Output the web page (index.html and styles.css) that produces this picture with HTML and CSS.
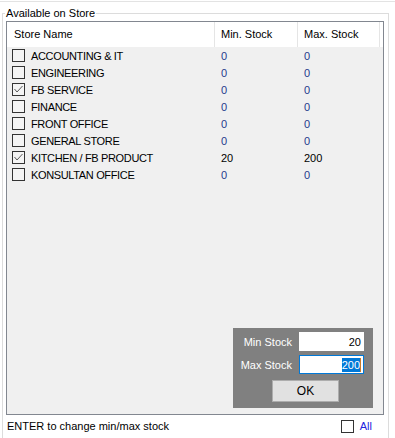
FILE: index.html
```html
<!DOCTYPE html>
<html>
<head>
<meta charset="utf-8">
<link rel="stylesheet" href="styles.css">
</head>
<body>
<div class="window">
  <fieldset class="group">
    <legend>Available on Store</legend>
    <div class="list">
      <div class="row head">
        <div class="cell c1">Store Name</div>
        <div class="cell c2">Min. Stock</div>
        <div class="cell c3">Max. Stock</div>
        <div class="cell c4"></div>
      </div>
      <div class="row item">
        <div class="cell c1"><span class="cb"></span>ACCOUNTING &amp; IT</div>
        <div class="cell c2 zero">0</div>
        <div class="cell c3 zero">0</div>
      </div>
      <div class="row item">
        <div class="cell c1"><span class="cb"></span>ENGINEERING</div>
        <div class="cell c2 zero">0</div>
        <div class="cell c3 zero">0</div>
      </div>
      <div class="row item">
        <div class="cell c1"><span class="cb"><svg viewBox="0 0 11 11" width="11" height="11"><polyline points="1.5,5 4,8 9.5,2" fill="none" stroke="#5a5a5a" stroke-width="1"/></svg></span>FB SERVICE</div>
        <div class="cell c2 zero">0</div>
        <div class="cell c3 zero">0</div>
      </div>
      <div class="row item">
        <div class="cell c1"><span class="cb"></span>FINANCE</div>
        <div class="cell c2 zero">0</div>
        <div class="cell c3 zero">0</div>
      </div>
      <div class="row item">
        <div class="cell c1"><span class="cb"></span>FRONT OFFICE</div>
        <div class="cell c2 zero">0</div>
        <div class="cell c3 zero">0</div>
      </div>
      <div class="row item">
        <div class="cell c1"><span class="cb"></span>GENERAL STORE</div>
        <div class="cell c2 zero">0</div>
        <div class="cell c3 zero">0</div>
      </div>
      <div class="row item">
        <div class="cell c1"><span class="cb"><svg viewBox="0 0 11 11" width="11" height="11"><polyline points="1.5,5 4,8 9.5,2" fill="none" stroke="#5a5a5a" stroke-width="1"/></svg></span>KITCHEN / FB PRODUCT</div>
        <div class="cell c2">20</div>
        <div class="cell c3">200</div>
      </div>
      <div class="row item">
        <div class="cell c1"><span class="cb"></span>KONSULTAN OFFICE</div>
        <div class="cell c2 zero">0</div>
        <div class="cell c3 zero">0</div>
      </div>

      <div class="editor">
        <div class="lbl">Min Stock</div>
        <div class="box">20</div>
        <div class="lbl">Max Stock</div>
        <div class="box focus"><span class="sel">200</span><span class="caret"></span></div>
        <div class="btn">OK</div>
      </div>
    </div>
    <div class="footer">
      <span class="hint">ENTER to change min/max stock</span>
      <span class="all"><span class="cb"></span><span class="alltext">All</span></span>
    </div>
  </fieldset>
</div>
</body>
</html>
```

FILE: styles.css
```css
html, body {
  margin: 0;
  padding: 0;
  background: #ffffff;
  overflow: hidden;
  height: 100%;
}

body {
  font-family: "Liberation Sans", Arial, sans-serif;
  font-size: 11px;
  color: #000000;
  padding-top: 1px;
  box-sizing: border-box;
}

.window {
  border-top: 1px solid #e3e3e3;
  height: 437px;
  overflow: hidden;
}

.group {
  margin: 5px 0 0 2px;
  width: 387px;
  height: 470px;
  box-sizing: border-box;
  border: 1px solid #dcdcdc;
  padding: 0 4px 0 3px;
  min-width: 0;
}

.group legend {
  padding: 0 1px;
  margin-left: -1px;
  line-height: 13px;
  font-size: 11px;
}

.list {
  margin-top: 1px;
  height: 394px;
  box-sizing: border-box;
  border: 1px solid #828790;
  background: #f0f0f0;
  display: flex;
  flex-direction: column;
}

.row {
  display: grid;
  grid-template-columns: 208px 83px 82px 1fr;
}

.head {
  height: 25px;
  background: #ffffff;
}

.head .cell {
  line-height: 25px;
  border-right: 1px solid #e5e5e5;
}

.head .c1 {
  padding-left: 7px;
}

.head .c2,
.head .c3 {
  padding-left: 6px;
}

.head .c4 {
  border-right: 0;
}

.item {
  height: 17px;
}

.item .cell {
  display: flex;
  align-items: center;
  white-space: nowrap;
}

.item .c1 {
  padding-left: 5px;
  letter-spacing: -0.35px;
}

.item .c2,
.item .c3 {
  padding-left: 6px;
}

.cb {
  width: 13px;
  height: 13px;
  box-sizing: border-box;
  border: 1px solid #333333;
  background: #f4f4f4;
  margin-right: 6px;
  display: inline-flex;
  flex: none;
  letter-spacing: 0;
}

.zero {
  color: #1f3a8c;
}

.editor {
  margin-top: auto;
  align-self: flex-end;
  margin-right: 10px;
  margin-bottom: 6px;
  width: 140px;
  box-sizing: border-box;
  background: #808080;
  padding: 4px 9px 6px 7px;
  display: grid;
  grid-template-columns: 1fr 65px;
  column-gap: 7px;
  row-gap: 4px;
  align-items: center;
}

.lbl {
  color: #ffffff;
  text-align: right;
  white-space: nowrap;
}

.box {
  height: 19px;
  box-sizing: border-box;
  background: #ffffff;
  border: 1px solid #ffffff;
  padding-right: 2px;
  display: flex;
  justify-content: flex-end;
  align-items: center;
}

.box.focus {
  border-color: #0078d7;
}

.sel {
  background: #0078d7;
  color: #ffffff;
  line-height: 14px;
}

.caret {
  width: 1px;
  height: 14px;
  background: #c87a2a;
}

.btn {
  grid-column: 1 / -1;
  justify-self: end;
  margin-right: 25px;
  margin-top: 2px;
  width: 67px;
  height: 22px;
  box-sizing: border-box;
  background: #e1e1e1;
  border: 1px solid #adadad;
  text-align: center;
  line-height: 20px;
  font-size: 12px;
}

.footer {
  height: 22px;
  display: flex;
  justify-content: space-between;
  align-items: center;
  padding-left: 1px;
  padding-right: 12px;
}

.all {
  display: flex;
  align-items: center;
}

.all .cb {
  background: #ffffff;
}

.alltext {
  color: #2222dd;
}
```
